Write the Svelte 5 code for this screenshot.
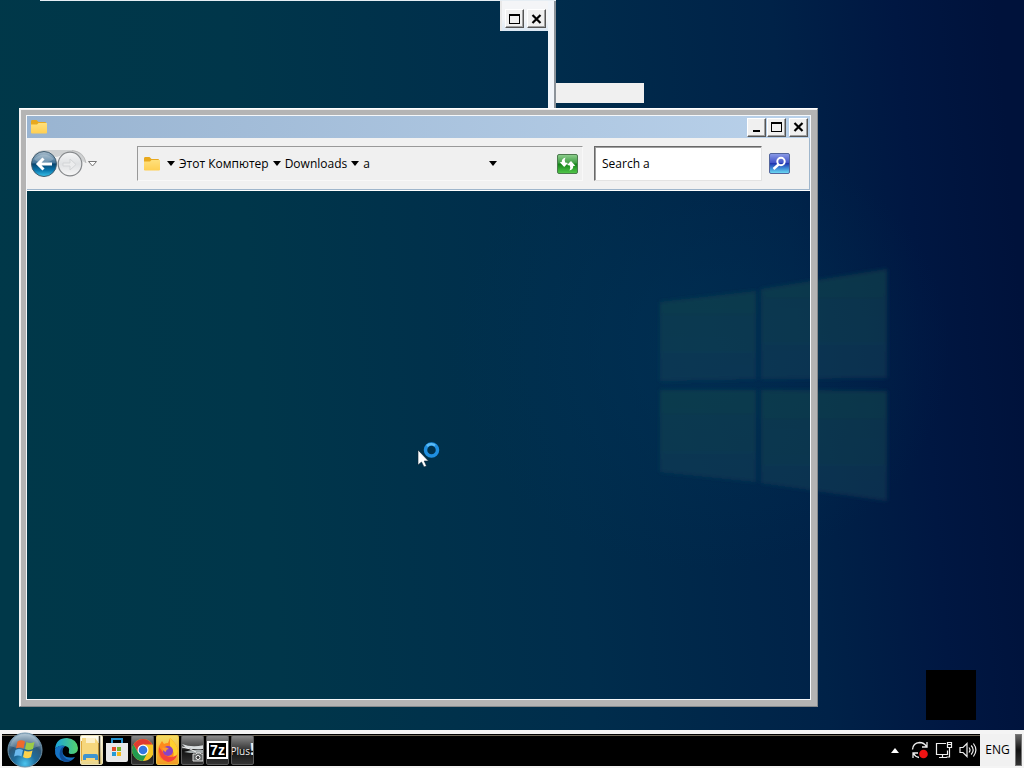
<script>
  const crumbs = ['Этот Компютер', 'Downloads', 'a'];
  let query = $state('Search a');
</script>

{#snippet folder(size)}
  <svg width={size} height={size} viewBox="0 0 18 18" aria-hidden="true">
    <path d="M1 3.500 Q1 2 2 2 H6.500 L8.500 4 H15 Q16 4 16 5 V15 H1z" fill="#e8a91e" />
    <path d="M1 6.500 H7 L8.500 5 H17 V14.500 Q17 15.500 16 15.500 H2 Q1 15.500 1 14.500z" fill="url(#folderFace)" />
    <defs>
      <linearGradient id="folderFace" x1="0" y1="0" x2="0" y2="1">
        <stop offset="0" stop-color="#ffe07c" />
        <stop offset="1" stop-color="#ffcf52" />
      </linearGradient>
    </defs>
  </svg>
{/snippet}

{#snippet caret()}
  <svg class="caret" width="8" height="5" viewBox="0 0 8 5" aria-hidden="true"><path d="M0 0h8L4 5z" fill="#000" /></svg>
{/snippet}

{#snippet maximizeGlyph()}
  <svg width="13" height="12" viewBox="0 0 13 12" aria-hidden="true" shape-rendering="crispEdges">
    <path d="M1 1h11v10H1zM2 3v7h9V3z" fill="#000" fill-rule="evenodd" />
  </svg>
{/snippet}

{#snippet closeGlyph()}
  <svg width="13" height="12" viewBox="0 0 13 12" aria-hidden="true"><path d="M2.500 2 L10.500 10 M10.500 2 L2.500 10" stroke="#000" stroke-width="2.200" /></svg>
{/snippet}

<div class="screen">
  <main class="desktop">
    <svg class="wallpaper" viewBox="0 0 1024 768" preserveAspectRatio="none" aria-hidden="true">
      <defs>
        <linearGradient id="sky" x1="0" y1="0.500" x2="1" y2="0.440">
          <stop offset="0" stop-color="#003849" />
          <stop offset="0.250" stop-color="#00364a" />
          <stop offset="0.550" stop-color="#002d4c" />
          <stop offset="0.780" stop-color="#002248" />
          <stop offset="0.900" stop-color="#001742" />
          <stop offset="1" stop-color="#00123b" />
        </linearGradient>
        <linearGradient id="pane" x1="0" y1="0" x2="0" y2="1">
          <stop offset="0" stop-color="#15454c" stop-opacity="0.600" />
          <stop offset="1" stop-color="#173f56" stop-opacity="0.550" />
        </linearGradient>
        <radialGradient id="glow">
          <stop offset="0" stop-color="#003458" stop-opacity="0.500" />
          <stop offset="1" stop-color="#003458" stop-opacity="0" />
        </radialGradient>
        <filter id="soft"><feGaussianBlur stdDeviation="2" /></filter>
      </defs>
      <rect width="1024" height="768" fill="url(#sky)" />
      <ellipse cx="700" cy="350" rx="250" ry="220" fill="url(#glow)" />
      <g fill="url(#pane)" filter="url(#soft)">
        <path d="M660 302 L756 291 V379 L660 381z" />
        <path d="M761 289 L887 269 V378 L761 379z" />
        <path d="M660 390 L756 390 V482 L660 472z" />
        <path d="M761 390 L887 391 V501 L761 483z" />
      </g>
    </svg>

    <section class="behind" aria-label="Background window">
      <div class="behind-controls">
        <button class="cap" aria-label="Maximize">{@render maximizeGlyph()}</button>
        <button class="cap" aria-label="Close">{@render closeGlyph()}</button>
      </div>
      <div class="behind-edge"></div>
    </section>
    <div class="scrap"></div>
    <div class="block"></div>

    <section class="window" aria-label="Explorer">
      <header class="titlebar">
        {@render folder(18)}
        <div class="caps">
          <button class="cap" aria-label="Minimize">
            <svg width="13" height="12" viewBox="0 0 13 12" aria-hidden="true"><path d="M3 9h7v2H3z" fill="#000" /></svg>
          </button>
          <button class="cap" aria-label="Maximize">{@render maximizeGlyph()}</button>
          <button class="cap close" aria-label="Close">{@render closeGlyph()}</button>
        </div>
      </header>

      <nav class="toolbar">
        <div class="travel">
          <svg class="pod" width="70" height="30" viewBox="0 0 70 30" aria-hidden="true">
            <defs>
              <linearGradient id="backFace" x1="0" y1="0" x2="0" y2="1">
                <stop offset="0" stop-color="#a9bccb" />
                <stop offset="0.450" stop-color="#3f7297" />
                <stop offset="0.500" stop-color="#07456f" />
                <stop offset="0.750" stop-color="#0876ad" />
                <stop offset="1" stop-color="#39c3ea" />
              </linearGradient>
              <linearGradient id="fwdFace" x1="0" y1="0" x2="0" y2="1">
                <stop offset="0" stop-color="#f5f6f7" />
                <stop offset="0.500" stop-color="#dfe1e3" />
                <stop offset="1" stop-color="#f7f7f7" />
              </linearGradient>
            </defs>
            <path d="M4 6 Q8 1 16 1 H42 Q54 2 56 14 L52 12 Q50 5 40 3 L27 8z" fill="#cfd1d2" />
            <path d="M42 1.500 Q54 3 56 14" fill="none" stroke="#bbb" />
            <circle cx="14" cy="15" r="12.500" fill="url(#backFace)" stroke="#405b6d" />
            <path d="M4 10 Q14 1 24 10 Q18 14 14 13 Q8 14 4 10z" fill="#fff" opacity="0.220" />
            <path d="M22 15 H8 M13.500 9.500 L8 15 L13.500 20.500" fill="none" stroke="#fff" stroke-width="3" />
            <circle cx="40" cy="15" r="11.800" fill="url(#fwdFace)" stroke="#85888b" stroke-width="1.200" />
            <path d="M33 14h7v-4l6 5.500-6 5.500v-4h-7z" fill="#ebeced" stroke="#d3d5d7" />
            <path d="M58.500 12.500h8l-4 4.500z" fill="#fff" stroke="#777" />
          </svg>
          <button class="round" aria-label="Back"></button>
          <button class="round" aria-label="Forward"></button>
        </div>

        <div class="address">
          {@render folder(18)}
          <div class="trail">
            {#each crumbs as crumb}
              <span class="crumb">{@render caret()}<a href="#top">{crumb}</a></span>
            {/each}
          </div>
          <button class="plain history" aria-label="Previous locations">{@render caret()}</button>
          <button class="plain" aria-label="Refresh">
            <svg width="21" height="20" viewBox="0 0 21 20" aria-hidden="true">
              <defs>
                <linearGradient id="green" x1="0" y1="0" x2="0" y2="1">
                  <stop offset="0" stop-color="#8fd08f" />
                  <stop offset="0.450" stop-color="#3f9d43" />
                  <stop offset="0.500" stop-color="#138318" />
                  <stop offset="1" stop-color="#53c94b" />
                </linearGradient>
              </defs>
              <rect x="0.500" y="0.500" width="20" height="19" rx="1.500" fill="url(#green)" stroke="#4c7a4e" />
              <path d="M8.500 3.500 Q4.500 4.500 4.800 8 L2.800 8.200 L7.200 13 L11 9 L8.200 8.500 Q7 6 8.500 3.500z" fill="#fff" />
              <path d="M12.500 16.500 Q16.500 15.500 16.200 12 L18.300 11.800 L14 7 L10 11 L12.800 11.500 Q14 14 12.500 16.500z" fill="#fff" />
            </svg>
          </button>
        </div>

        <input class="search" type="text" aria-label="Search" bind:value={query} />
        <button class="plain" aria-label="Start search">
          <svg width="21" height="21" viewBox="0 0 21 21" aria-hidden="true">
            <defs>
              <linearGradient id="blue" x1="0" y1="0" x2="0" y2="1">
                <stop offset="0" stop-color="#8d9de8" />
                <stop offset="0.450" stop-color="#4355c8" />
                <stop offset="0.500" stop-color="#1f37b0" />
                <stop offset="0.750" stop-color="#3f8fd8" />
                <stop offset="1" stop-color="#6fe0f5" />
              </linearGradient>
            </defs>
            <rect x="0.500" y="0.500" width="20" height="20" rx="1.500" fill="url(#blue)" stroke="#53659c" />
            <circle cx="12" cy="8.500" r="3.700" fill="none" stroke="#fff" stroke-width="2" />
            <path d="M9.500 11.500 L4.500 16" stroke="#fff" stroke-width="2.500" />
          </svg>
        </button>
      </nav>
      <div class="content"></div>
    </section>

    <svg class="pointer" width="24" height="28" viewBox="0 0 24 28" aria-hidden="true">
      <circle cx="14.500" cy="8" r="6" fill="none" stroke="#1f8fe0" stroke-width="3.500" />
      <path d="M10 4 A6 6 0 0 1 18 3.500" fill="none" stroke="#5cbcf5" stroke-width="2.500" />
      <path d="M1 8 V23 L4.500 20 L7 25 L9.500 24 L7.200 19 H11.500z" fill="#fff" stroke="#0a2233" stroke-width="0.600" />
    </svg>
  </main>

  <footer class="taskbar">
    <button class="start" aria-label="Start">
      <svg width="38" height="36" viewBox="0 0 38 36" aria-hidden="true">
        <defs>
          <radialGradient id="orb" cx="0.500" cy="0.900" r="0.900">
            <stop offset="0" stop-color="#4cc4ef" />
            <stop offset="0.350" stop-color="#1f6d9d" />
            <stop offset="0.650" stop-color="#2f5877" />
            <stop offset="1" stop-color="#a9c2d3" />
          </radialGradient>
        </defs>
        <circle cx="19" cy="18" r="17" fill="url(#orb)" stroke="#6f93ab" />
        <path d="M4 14 Q8 2 19 2 Q30 2 34 14 Q19 20 4 14z" fill="#fff" opacity="0.220" />
        <path d="M11.500 9.500 Q15 7 19 9.500 L17.500 16.500 Q14 14.500 10 16.500z" fill="#ef6a2c" />
        <path d="M20.500 10 Q24 12 28.500 10 L27 17 Q22.500 19 19 17z" fill="#9bcb47" />
        <path d="M9.500 18 Q13 16 17 18 L15.500 24.500 Q12 22.500 8 24.500z" fill="#6bb9ee" />
        <path d="M18.500 18.500 Q22 20.500 26.500 18.500 L25 25 Q21 27.500 17 25z" fill="#fdd14a" />
      </svg>
    </button>

    <div class="apps">
      <button class="app bare" aria-label="Edge">
        <svg width="24" height="26" viewBox="0 0 24 26" aria-hidden="true">
          <defs>
            <linearGradient id="edgeTop" x1="0" y1="0" x2="1" y2="0">
              <stop offset="0" stop-color="#1aa3de" />
              <stop offset="1" stop-color="#55d36b" />
            </linearGradient>
          </defs>
          <path d="M1 12 Q2 1 13 1 Q23 2 24 11 Q24 17 17 17 Q14 17 15 14 Q16 10 11 9 Q5 8 1 12z" fill="url(#edgeTop)" />
          <path d="M1 12 Q5 7 11 9 Q7 12 9 17 Q12 22 21 20 Q17 26 10 24.500 Q0 22 1 12z" fill="#1673c4" />
          <path d="M11 9 Q6 14 10 20 Q13 24 18 22.500 Q14 26 10 24.500 Q4 21 6 14 Q7 10 11 9z" fill="#0f4c97" />
        </svg>
      </button>
      <button class="app active" aria-label="File Explorer">
        <svg width="23" height="30" viewBox="0 0 23 30" aria-hidden="true">
          <path d="M0 6h8l2 2h9v18H0z" fill="#dfa93a" />
          <path d="M2 3h13l3 4v19H2z" fill="#f6d77d" />
          <path d="M6 1h9v7H6z" fill="#fffbe9" opacity="0.700" />
          <path d="M3 21 q0-2 2-2 h11 q2 0 2 2 v4 h-3 v-2 H6v2H3z" fill="#3f94cf" />
          <path d="M19.500 0v30" stroke="#3a3626" stroke-width="1.500" />
        </svg>
      </button>
      <button class="app bare" aria-label="Store">
        <svg width="24" height="30" viewBox="0 0 24 30" aria-hidden="true">
          <path d="M7 8V4h10v4" fill="none" stroke="#2492ce" stroke-width="2" />
          <path d="M1 8 H23 V25 Q23 27 21 27 H3 Q1 27 1 25z" fill="#e8e8e8" />
          <path d="M7 12h4v4H7z" fill="#e24e2a" /><path d="M12 12h4v4h-4z" fill="#72b62b" />
          <path d="M7 17h4v4H7z" fill="#259bd7" /><path d="M12 17h4v4h-4z" fill="#f3b91d" />
        </svg>
      </button>
      <button class="app" aria-label="Chrome">
        <svg width="22" height="24" viewBox="0 0 22 22" aria-hidden="true">
          <circle cx="11" cy="11" r="11" fill="#f7c626" />
          <path d="M1.500 5.500 A11 11 0 0 1 20.500 5.500 H11 L6.200 13.500z" fill="#df3b30" />
          <path d="M1.500 5.500 A11 11 0 0 0 11 22 L15.500 13.800 H6.200z" fill="#239a50" />
          <circle cx="11" cy="11" r="5.500" fill="#fff" /><circle cx="11" cy="11" r="4.300" fill="#3478e0" />
        </svg>
      </button>
      <button class="app fox" aria-label="Firefox">
        <svg width="22" height="26" viewBox="0 0 22 26" aria-hidden="true">
          <path d="M2 9 L5 4 L7 7 Q9 6 11 6 L13 1 Q20 7 21 14 Q20 24 11 25 Q1 24 1 14z" fill="#ff8a1c" />
          <path d="M13 1 Q20 7 21 14 Q20 20 15 23 Q19 15 13 9z" fill="#ffd02f" />
          <path d="M2 10 Q1 22 11 25 Q18 24 20 18 Q14 22 8 18z" fill="#f5433b" />
          <circle cx="11" cy="14" r="5" fill="#8a43c5" />
          <path d="M5 11 Q9 9 12 12 Q9 12 9 15 Q6 14 5 11z" fill="#ff9a2c" />
        </svg>
      </button>
      <button class="app" aria-label="Capture tool">
        <svg width="22" height="26" viewBox="0 0 22 26" aria-hidden="true">
          <path d="M0 7 Q10 11 22 8 V12 Q12 13 4 11z" fill="#d8dcdd" />
          <path d="M2 15 Q10 12 22 13 V16 L8 16z" fill="#a3aaab" />
          <path d="M0 10 Q8 11 14 15" fill="none" stroke="#eee" />
          <path d="M11 17h3l1-1h3l1 1h2v7H11z" fill="#656969" stroke="#ddd" />
          <circle cx="16" cy="20.500" r="2" fill="#333" stroke="#fff" />
        </svg>
      </button>
      <button class="app" aria-label="7-Zip"><span class="zip">7z</span></button>
      <button class="app" aria-label="Plus!"><span class="plus">Plus<b>!</b></span></button>
    </div>

    <div class="tray">
      <button class="plain" aria-label="Show hidden icons">
        <svg width="8" height="5" viewBox="0 0 8 5" aria-hidden="true"><path d="M0 5h8L4 0z" fill="#fff" /></svg>
      </button>
      <button class="plain" aria-label="Update status">
        <svg width="18" height="18" viewBox="0 0 18 18" aria-hidden="true">
          <path d="M1.500 8.500 Q2 2 8.500 1.500 Q13 1.500 15.500 5.500 M16 1v5h-5 M2 17v-5h5 M2.500 12.500 Q4.500 16 8 16.500" fill="none" stroke="#eee" stroke-width="1.300" />
          <circle cx="12.500" cy="13" r="4.300" fill="#ee1313" />
        </svg>
      </button>
      <button class="plain" aria-label="Network">
        <svg width="18" height="18" viewBox="0 0 18 18" aria-hidden="true">
          <path d="M11 2.500H1.500v11h11v-4 M4 16.500h8 M7.500 13.500v3 M12.500 1.500h4v5h-4z M12.500 3.500h4 M14.500 6.500v9.500h-3" fill="none" stroke="#eee" stroke-width="1.200" />
        </svg>
      </button>
      <button class="plain" aria-label="Volume">
        <svg width="18" height="16" viewBox="0 0 18 16" aria-hidden="true">
          <path d="M1 5.500h3l4-4v13l-4-4H1z M10 5.500q2 2.500 0 5 M12.200 3.500q4 4.500 0 9 M14.400 1.500q5 6.500 0 13" fill="none" stroke="#eee" stroke-width="1.200" />
        </svg>
      </button>
    </div>
    <button class="lang">ENG</button>
    <button class="peek" aria-label="Show desktop"></button>
  </footer>
</div>

<style>
  :global(body) {
    margin: 0;
    overflow: hidden;
  }
  .screen {
    height: 100vh;
    display: flex;
    flex-direction: column;
    overflow: hidden;
    background: #003048;
    font: 12px/16px "Open Sans", "Noto Sans", sans-serif;
    color: #000;
  }
  svg {
    display: block;
    flex: none;
  }
  button {
    font: inherit;
    padding: 0;
    border: 0;
    background: none;
    display: flex;
    align-items: center;
    justify-content: center;
  }
  a {
    color: inherit;
    text-decoration: none;
  }
  .desktop {
    flex: 1;
    position: relative;
    min-height: 0;
  }
  .wallpaper {
    position: absolute;
    top: 0;
    left: 0;
    width: 100%;
    height: 100vh;
  }

  .behind {
    position: absolute;
    left: 40px;
    top: 0;
    width: 516px;
    height: 108px;
    box-sizing: border-box;
    border-top: 1px solid #e6eef4;
    display: flex;
    justify-content: flex-end;
    align-items: flex-start;
  }
  .behind-controls {
    display: flex;
    gap: 3px;
    padding: 8px 2px 3px 3px;
    background: linear-gradient(#f4f5f7 60%, #dce8f4);
    border-left: 2px solid #e8e8e8;
  }
  .behind-edge {
    width: 6px;
    height: 100%;
    background: #f1f5fa;
    border-right: 2px solid #8c939a;
  }
  .scrap {
    position: absolute;
    left: 556px;
    top: 83px;
    width: 88px;
    height: 20px;
    background: #f0f0f0;
  }
  .block {
    position: absolute;
    right: 48px;
    bottom: 10px;
    width: 50px;
    height: 50px;
    background: #000;
  }

  .cap {
    width: 19px;
    height: 19px;
    box-sizing: border-box;
    background: #f0f0f0;
    border: 1px solid;
    border-color: #fff #555 #555 #fff;
    box-shadow: inset -1px -1px #a0a0a0;
  }

  .window {
    position: absolute;
    left: 19px;
    right: 206px;
    top: 108px;
    bottom: 23px;
    box-sizing: border-box;
    display: flex;
    flex-direction: column;
    border: 1px solid;
    border-color: #fff #85898c #85898c #f4f4f4;
    outline: 5px solid #b4b4b4;
    outline-offset: -7px;
    box-shadow: inset 1px 1px #f0f0f0, inset 0 0 0 2px #b4b4b4, inset 0 0 0 7px #f4f7fa;
    padding: 7px;
  }
  .titlebar {
    height: 22px;
    display: flex;
    align-items: center;
    padding: 0 2px 0 3px;
    background: linear-gradient(90deg, #99b4d1, #b9d1ea);
  }
  .caps {
    display: flex;
    margin-left: auto;
    gap: 1px;
  }
  .close {
    margin-left: 2px;
  }
  .toolbar {
    height: 53px;
    box-sizing: border-box;
    display: flex;
    align-items: center;
    padding: 0 20px 1px 3px;
    background: #f1f1f1;
    border-bottom: 1px solid #fff;
    box-shadow: inset 0 -1px #9fb6cc, inset -1px 0 #9fb6cc;
  }
  .travel {
    position: relative;
    display: flex;
    width: 70px;
    margin-right: 37px;
  }
  .pod {
    position: absolute;
    left: 0;
    top: 0;
    pointer-events: none;
  }
  .round {
    width: 27px;
    height: 30px;
    border-radius: 50%;
  }
  .address {
    flex: 1;
    height: 35px;
    box-sizing: border-box;
    display: flex;
    align-items: center;
    padding: 0 4px 0 5px;
    border: 1px solid;
    border-color: #999 #f8f8f8 #f8f8f8 #999;
    background: #f0f0f0;
  }
  .trail {
    display: flex;
    gap: 4px;
    margin-left: 6px;
  }
  .crumb {
    display: flex;
    align-items: center;
    gap: 4px;
  }
  .history {
    margin-left: auto;
    margin-right: 60px;
  }
  .search {
    width: 168px;
    height: 35px;
    box-sizing: border-box;
    margin: 0 7px 0 11px;
    padding: 0 7px;
    font: inherit;
    color: #000;
    background: #fff;
    border: 1px solid;
    border-color: #696969 #e3e3e3 #e3e3e3 #696969;
    box-shadow: inset 1px 1px #a0a0a0;
    outline: 0;
  }
  .content {
    flex: 1;
  }
  .pointer {
    position: absolute;
    left: 417px;
    top: 442px;
  }

  .taskbar {
    position: relative;
    height: 38px;
    box-sizing: border-box;
    display: flex;
    align-items: stretch;
    border: solid #f4f4f4;
    border-width: 4px 2px 2px 2px;
    background: #000;
    box-shadow: inset 0 1px #000, inset 0 2px #6e6657;
  }
  .start {
    width: 46px;
    margin: -2px 0;
    z-index: 1;
  }
  .apps {
    display: flex;
    align-items: center;
    gap: 2px;
    padding-left: 6px;
  }
  .app {
    width: 23px;
    height: 30px;
    box-sizing: border-box;
    overflow: hidden;
    border: 1px solid #5a5a5a;
    border-radius: 2px;
    background: linear-gradient(#8a8a8a, #3c3c3c 45%, #101010 50%, #333);
  }
  .app.bare {
    width: 24px;
    border: 0;
    background: none;
  }
  .app.active {
    border-color: #e8dfb8;
    background: linear-gradient(#fffdf2, #e9d489);
  }
  .app.fox {
    background: linear-gradient(#f3dc63, #f29a22);
    border-color: #e8c14a;
  }
  .zip {
    font: bold 14px/14px "Liberation Sans", sans-serif;
    padding: 0 1px;
    border: 2px solid #fff;
    background: #000;
    color: #fff;
  }
  .plus {
    font: 10px/20px "Open Sans", sans-serif;
    color: #eee;
    white-space: nowrap;
  }
  .plus b {
    font-size: 16px;
  }
  .tray {
    margin-left: auto;
    display: flex;
    align-items: center;
    gap: 6px;
    padding-right: 3px;
  }
  .tray .plain:first-child {
    margin-right: 6px;
  }
  .lang {
    width: 35px;
    background: #f1f1f1;
  }
  .peek {
    width: 7px;
    box-sizing: border-box;
    border: 1px solid #777;
    background: linear-gradient(#666, #111 50%, #333);
  }
</style>
